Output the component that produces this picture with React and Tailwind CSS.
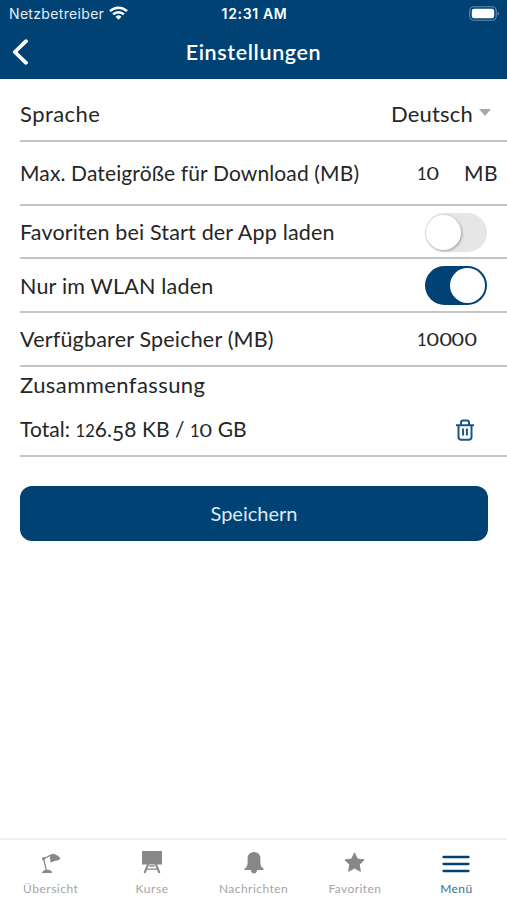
function Num({ value }) {
  return value.split('').map((c, i) => {
    if (c === '0') return <span key={i} className="mx-[1.5px] inline-block scale-x-130 text-[0.79em]">0</span>;
    if (c === '1' || c === '2') return <span key={i} className="text-[0.79em]">{c}</span>;
    if (c === '5') return <span key={i} className="relative top-[0.18em]">5</span>;
    return <span key={i}>{c}</span>;
  });
}

function Row({ className, children }) {
  return (
    <div className={`ml-5 flex items-center border-b-2 border-[#c4c4c4] whitespace-nowrap ${className}`}>{children}</div>
  );
}

function Toggle({ on }) {
  return (
    <div className={`mt-px mr-5 ml-auto flex h-[39px] w-[62px] items-center rounded-full ${on ? 'justify-end bg-[#004274] px-[2px]' : 'bg-[#e6e6e6] px-[1px]'}`}>
      <div className={`size-[35px] rounded-full bg-white ${on ? '' : 'shadow-[1px_1px_3px_rgba(0,0,0,0.3)]'}`} />
    </div>
  );
}

function Tab({ label, active, className, children }) {
  return (
    <div className={`flex flex-1 flex-col items-center ${active ? 'text-[#004274]' : 'text-[#888888]'}`}>
      <div className="flex h-[34px] items-end">{children}</div>
      <span className={`mt-[7px] text-[12px] leading-[16px] whitespace-nowrap ${active ? 'text-[#3a6c94]' : 'text-[#a4a4a4]'} ${className}`}>{label}</span>
    </div>
  );
}

function Wifi() {
  return (
    <svg className="mb-px ml-[5px] h-[14px] w-[19px]" viewBox="0 0 19 14" fill="none" stroke="white" strokeWidth="2.5">
      <path d="M1 5.1a12.2 12.2 0 0 1 17 0" />
      <path d="M4.1 8.3a7.8 7.8 0 0 1 10.8 0" />
      <path d="M6.6 10.7a4.2 4.2 0 0 1 5.8 0L9.5 13.7z" fill="white" stroke="none" />
    </svg>
  );
}

function Battery() {
  return (
    <svg className="mb-px h-[15px] w-[31px]" viewBox="0 0 31 15">
      <rect x="0.8" y="0.8" width="26.4" height="13.4" rx="4" fill="none" stroke="#668dac" strokeWidth="1.1" />
      <rect x="2.8" y="2.8" width="22.4" height="9.4" rx="2.2" fill="white" />
      <path d="M28.6 5.2a2.6 2.6 0 0 1 0 4.6z" fill="#668dac" />
    </svg>
  );
}

export default function App() {
  return (
    <div className="flex h-[900px] w-[507px] flex-col overflow-hidden bg-white font-['Lato',sans-serif] text-[21px] leading-[26px] text-[#262626]">
      <header className="h-[79px] bg-[#004274] text-white">
        <div className="grid h-[27px] grid-cols-3 items-center pr-[7px] pl-[9px] font-['Inter',sans-serif] text-[14px]">
          <div className="flex items-center">
            <span className="tracking-[0.33px] text-[#e4ecf2]">Netzbetreiber</span>
            <Wifi />
          </div>
          <span className="text-center font-semibold tracking-[0.65px]">12:31 AM</span>
          <div className="flex justify-end"><Battery /></div>
        </div>
        <div className="grid h-[50px] grid-cols-[100px_1fr_100px] items-center">
          <svg className="ml-3 h-[26px] w-[16px]" viewBox="0 0 16 26" fill="none" stroke="white" strokeWidth="3.8" strokeLinecap="round" strokeLinejoin="round">
            <path d="M14 2.2L2.8 13L14 23.8" />
          </svg>
          <h1 className="text-center text-[21.5px] font-semibold tracking-[0.63px]">Einstellungen</h1>
        </div>
      </header>
      <main>
        <Row className="h-[63px] pt-[9px]">
          <span className="text-[22px] tracking-[0.45px]">Sprache</span>
          <span className="ml-auto text-[22px] tracking-[0.2px]">Deutsch</span>
          <svg className="mr-4 mb-1 ml-[6px] h-[7px] w-3" viewBox="0 0 12 7" fill="#a8a8a8"><path d="M0 0h12L6 7z" /></svg>
        </Row>
        <Row className="h-[64px]">
          <span className="w-[397px] tracking-[0.13px]">Max. Dateigröße für Download (MB)</span>
          <span className="w-[47px]"><Num value="10" /></span>
          <span className="tracking-[0.4px]">MB</span>
        </Row>
        <Row className="h-[53px]">
          <span className="text-[21.5px] tracking-[0.17px]">Favoriten bei Start der App laden</span>
          <Toggle />
        </Row>
        <Row className="h-[54px]">
          <span className="pt-px text-[21.5px] tracking-[0.2px]">Nur im WLAN laden</span>
          <Toggle on />
        </Row>
        <Row className="h-[54px]">
          <span className="w-[397px] text-[21.5px] tracking-[0.19px]">Verfügbarer Speicher (MB)</span>
          <span><Num value="10000" /></span>
        </Row>
        <div className="mt-[5px] ml-5 text-[22px] tracking-[0.43px]">Zusammenfassung</div>
        <Row className="h-[59px] pt-[7px]">
          <span className="tracking-[0.05px]">Total: <Num value="126.58" /> KB / <Num value="10" /> GB</span>
          <svg className="mr-8 ml-auto h-[22px] w-[20px]" viewBox="0 0 20 22" fill="none" stroke="#1c5384" strokeWidth="2">
            <path d="M1 6.2h18M6 6V3.4Q6 1.5 8 1.5h4Q14 1.5 14 3.4V6M3.5 6v12q0 2.7 2.7 2.7h7.6q2.7 0 2.7-2.7V6M8.1 9.5v7M11.9 9.5v7" />
          </svg>
        </Row>
        <button className="mt-[29px] ml-5 flex h-[55px] w-[468px] items-center justify-center rounded-[12px] bg-[#004274] pb-[2px] text-[20px] text-[#dfe9f1]">Speichern</button>
      </main>
      <nav className="mt-auto flex h-[62px] border-t-2 border-[#f0f0f0]">
        <Tab label="Übersicht" className="tracking-[0.5px]">
          <svg className="h-[21px] w-[20px]" viewBox="0 0 20 21" fill="currentColor">
            <path d="M9.4 2.1Q10 1 12 .8l2 .5q4 1.2 5.6 4.4l-2.4 1.5Q14 7.4 9.6 9.4Q8.4 5 9.4 2.1zM.8 20q.8-3 5.2-3.2t5.2 3.2z" />
            <path d="M10 2.2L2.6 5.7L5.3 17.5" fill="none" stroke="currentColor" strokeWidth="1.3" />
            <circle cx="2.6" cy="5.7" r="1.6" />
          </svg>
        </Tab>
        <Tab label="Kurse" className="tracking-[0.6px]">
          <svg className="h-[24px] w-[20px]" viewBox="0 0 20 24" fill="none" stroke="currentColor">
            <rect x="0.5" y="1.5" width="19" height="12.5" fill="currentColor" />
            <path d="M6.2 14L2.5 23M13.8 14l3.7 9" strokeWidth="2" />
            <path d="M7.5 16h5M4.8 19.2h10.4" strokeWidth="1.3" />
          </svg>
        </Tab>
        <Tab label="Nachrichten" className="tracking-[0.45px]">
          <svg className="h-[22px] w-[20px]" viewBox="0 0 20 22" fill="currentColor">
            <path d="M3.6 6.5Q3.8 0 10 0t6.4 6.5V12q.2 2.8 3.1 4.5V18h-6.3Q12.5 21.5 10 21.5T6.8 18H.5v-1.5Q3.4 14.8 3.6 12z" />
          </svg>
        </Tab>
        <Tab label="Favoriten" className="tracking-[0.4px]">
          <svg className="mb-[2px] h-[20px] w-[21px]" viewBox="0 0 21 20" fill="currentColor" stroke="currentColor" strokeWidth="1" strokeLinejoin="round">
            <path d="M10.5.8l2.9 6.2 6.7.9-4.9 4.7 1.2 6.7-5.9-3.2-5.9 3.2 1.2-6.7L.9 7.9 7.6 7z" />
          </svg>
        </Tab>
        <Tab label="Menü" active className="tracking-[0.4px]">
          <svg className="mb-[1px] h-[18px] w-[28px]" viewBox="0 0 28 18" fill="none" stroke="currentColor" strokeWidth="2.3" strokeLinecap="round">
            <path d="M1.5 2h25M1.5 9h25M1.5 16h25" />
          </svg>
        </Tab>
      </nav>
    </div>
  );
}
